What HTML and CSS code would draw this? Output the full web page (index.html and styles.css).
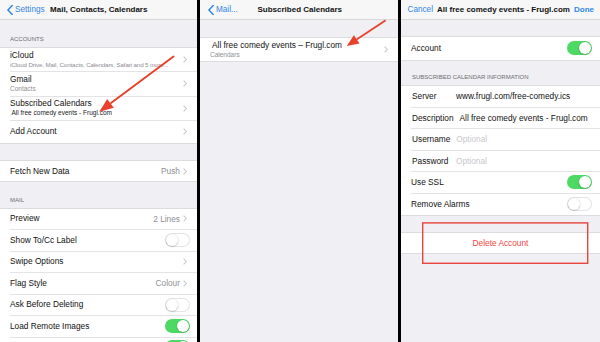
FILE: index.html
```html
<!DOCTYPE html>
<html lang="en">
<head>
<meta charset="utf-8">
<title>Mail, Contacts, Calendars</title>
<link rel="stylesheet" href="styles.css">
</head>
<body>
<div class="screens">
  <section class="phone p1">
    <header class="nav nav-grid">
      <span class="back"><svg class="back-chev" width="6" height="10" viewBox="0 0 6 10"><path d="M5.2 0.6 L0.9 5 L5.2 9.4" fill="none" stroke="currentColor" stroke-width="1.5" stroke-linecap="round" stroke-linejoin="round"/></svg>Settings</span>
      <h1 class="title">Mail, Contacts, Calendars</h1>
      <span></span>
    </header>
    <div class="band b-accounts"><span class="sect">ACCOUNTS</span></div>
    <ul class="group">
      <li class="row r-icloud"><div class="row-body"><div class="txt"><div class="t">iCloud</div><div class="s tight">iCloud Drive, Mail, Contacts, Calendars, Safari and 5 more...</div></div><svg class="chev" width="4" height="7" viewBox="0 0 4 7"><path d="M0.6 0.6 L3.3 3.5 L0.6 6.4" fill="none" stroke="#c7c7cc" stroke-width="1.1"/></svg></div></li>
      <li class="row r-two"><div class="row-body"><div class="txt"><div class="t">Gmail</div><div class="s">Contacts</div></div><svg class="chev" width="4" height="7" viewBox="0 0 4 7"><path d="M0.6 0.6 L3.3 3.5 L0.6 6.4" fill="none" stroke="#c7c7cc" stroke-width="1.1"/></svg></div></li>
      <li class="row r-two"><div class="row-body"><div class="txt"><div class="t">Subscribed Calendars</div><div class="s dark">All free comedy events - Frugl.com</div></div><svg class="chev" width="4" height="7" viewBox="0 0 4 7"><path d="M0.6 0.6 L3.3 3.5 L0.6 6.4" fill="none" stroke="#c7c7cc" stroke-width="1.1"/></svg></div></li>
      <li class="row"><div class="row-body"><span class="t">Add Account</span><svg class="chev" width="4" height="7" viewBox="0 0 4 7"><path d="M0.6 0.6 L3.3 3.5 L0.6 6.4" fill="none" stroke="#c7c7cc" stroke-width="1.1"/></svg></div></li>
    </ul>
    <div class="gap g1"></div>
    <ul class="group">
      <li class="row r-fetch"><div class="row-body"><span class="t">Fetch New Data</span><span class="right"><span class="v">Push</span><svg class="chev" width="4" height="7" viewBox="0 0 4 7"><path d="M0.6 0.6 L3.3 3.5 L0.6 6.4" fill="none" stroke="#c7c7cc" stroke-width="1.1"/></svg></span></div></li>
    </ul>
    <div class="band b-mail"><span class="sect">MAIL</span></div>
    <ul class="group">
      <li class="row"><div class="row-body"><span class="t">Preview</span><span class="right"><span class="v">2 Lines</span><svg class="chev" width="4" height="7" viewBox="0 0 4 7"><path d="M0.6 0.6 L3.3 3.5 L0.6 6.4" fill="none" stroke="#c7c7cc" stroke-width="1.1"/></svg></span></div></li>
      <li class="row"><div class="row-body tog"><span class="t">Show To/Cc Label</span><span class="toggle"></span></div></li>
      <li class="row"><div class="row-body"><span class="t">Swipe Options</span><svg class="chev" width="4" height="7" viewBox="0 0 4 7"><path d="M0.6 0.6 L3.3 3.5 L0.6 6.4" fill="none" stroke="#c7c7cc" stroke-width="1.1"/></svg></div></li>
      <li class="row"><div class="row-body"><span class="t">Flag Style</span><span class="right"><span class="v">Colour</span><svg class="chev" width="4" height="7" viewBox="0 0 4 7"><path d="M0.6 0.6 L3.3 3.5 L0.6 6.4" fill="none" stroke="#c7c7cc" stroke-width="1.1"/></svg></span></div></li>
      <li class="row"><div class="row-body tog"><span class="t">Ask Before Deleting</span><span class="toggle"></span></div></li>
      <li class="row"><div class="row-body tog"><span class="t">Load Remote Images</span><span class="toggle on"></span></div></li>
      <li class="row r-peek"><div class="row-body tog peek"><span class="toggle on"></span></div></li>
    </ul>
  </section>

  <section class="phone p2">
    <header class="nav nav-grid nav2">
      <span class="back"><svg class="back-chev" width="6" height="10" viewBox="0 0 6 10"><path d="M5.2 0.6 L0.9 5 L5.2 9.4" fill="none" stroke="currentColor" stroke-width="1.5" stroke-linecap="round" stroke-linejoin="round"/></svg>Mail...</span>
      <h1 class="title">Subscribed Calendars</h1>
      <span></span>
    </header>
    <div class="gap g2"></div>
    <ul class="group">
      <li class="row r-cal"><div class="row-body"><div class="txt"><div class="t">All free comedy events – Frugl.com</div><div class="s">Calendars</div></div><svg class="chev" width="4" height="7" viewBox="0 0 4 7"><path d="M0.6 0.6 L3.3 3.5 L0.6 6.4" fill="none" stroke="#c7c7cc" stroke-width="1.1"/></svg></div></li>
    </ul>
  </section>

  <section class="phone p3">
    <header class="nav nav3">
      <span class="link">Cancel</span>
      <h1 class="title">All free comedy events - Frugl.com</h1>
      <span class="link bold">Done</span>
    </header>
    <div class="gap g3"></div>
    <ul class="group">
      <li class="row r-account"><div class="row-body tog"><span class="t">Account</span><span class="toggle on"></span></div></li>
    </ul>
    <div class="band b-info"><span class="sect">SUBSCRIBED CALENDAR INFORMATION</span></div>
    <ul class="group">
      <li class="row"><div class="row-body field"><span class="lbl">Server</span><span class="val">www.frugl.com/free-comedy.ics</span></div></li>
      <li class="row"><div class="row-body field"><span class="lbl">Description</span><span class="val">All free comedy events - Frugl.com</span></div></li>
      <li class="row"><div class="row-body field"><span class="lbl">Username</span><span class="val ph">Optional</span></div></li>
      <li class="row"><div class="row-body field"><span class="lbl">Password</span><span class="val ph">Optional</span></div></li>
      <li class="row"><div class="row-body tog"><span class="t">Use SSL</span><span class="toggle on"></span></div></li>
      <li class="row"><div class="row-body tog"><span class="t">Remove Alarms</span><span class="toggle"></span></div></li>
    </ul>
    <div class="gap g4"></div>
    <ul class="group">
      <li class="row r-delete"><div class="row-body center"><span class="danger">Delete Account</span></div></li>
    </ul>
  </section>

  <svg class="marks" width="600" height="342" viewBox="0 0 600 342">
    <line x1="173.5" y1="56.5" x2="111" y2="103" stroke="#e8412c" stroke-width="2" stroke-linecap="round"/>
    <polygon points="99.3,111.7 113.8,107.8 107.2,98.9" fill="#e8412c"/>
    <line x1="385" y1="20.7" x2="357" y2="39.2" stroke="#e8412c" stroke-width="1.8" stroke-linecap="round"/>
    <polygon points="346.7,46 359.5,43.6 353.9,35.2" fill="#e8412c"/>
    <rect x="422.7" y="222.9" width="165" height="40.4" fill="none" stroke="#e8453c" stroke-width="1.4"/>
  </svg>
</div>
</body>
</html>
```

FILE: styles.css
```css
* { box-sizing: border-box; }

html, body {
  margin: 0;
  padding: 0;
}

body {
  background: #000;
  font-family: "Liberation Sans", Arial, Helvetica, sans-serif;
  color: #111;
  width: 600px;
  height: 342px;
  overflow: hidden;
}

.screens {
  position: relative;
  display: flex;
  gap: 3px;
  width: 600px;
  height: 342px;
  overflow: hidden;
}

.phone {
  flex: none;
  height: 342px;
  background: #efeff4;
  overflow: hidden;
}

.p1 { width: 197px; }
.p2 { width: 198px; }
.p3 { width: 199px; }

/* navigation bars */
.nav {
  height: 20px;
  background: #f7f7f8;
  border-bottom: 1px solid #d8d8dc;
  align-items: center;
  padding: 0 6px 0 6.5px;
}

.nav-grid {
  display: grid;
  grid-template-columns: 1fr auto 1fr;
}

.nav2 { padding-left: 7.5px; }

.nav3 {
  display: flex;
  justify-content: space-between;
  padding: 0 6px 0 6.5px;
}

.title {
  margin: 0;
  font-size: 8px;
  font-weight: bold;
  color: #111;
  white-space: nowrap;
  line-height: 10px;
}

.back, .link {
  display: flex;
  align-items: center;
  gap: 2.5px;
  color: #2f86ea;
  font-size: 8.2px;
  line-height: 10px;
  white-space: nowrap;
}

.link.bold { font-weight: bold; font-size: 8px; }

.back-chev { flex: none; }

/* grey bands and gaps */
.band {
  display: flex;
  align-items: flex-end;
}

.sect {
  font-size: 6px;
  line-height: 7px;
  color: #6d6d72;
  padding: 0 10px 4px;
  white-space: nowrap;
}

.b-accounts { height: 27px; }
.b-mail { height: 25.5px; }
.b-info { height: 24.5px; padding-left: 1px; }

.g1 { height: 16.5px; }
.g2 { height: 17px; }
.g3 { height: 16px; }
.g4 { height: 15.5px; }

/* grouped lists */
.group {
  list-style: none;
  margin: 0;
  padding: 0;
  background: #fff;
  border-top: 1px solid #dcdce0;
  border-bottom: 1px solid #dcdce0;
}

.row {
  height: 21.5px;
  padding-left: 10px;
  background: #fff;
}

.r-icloud { height: 24px; }
.r-two { height: 24.5px; }
.r-fetch { height: 20px; }
.r-cal { height: 23px; }
.r-account { height: 22.5px; }
.r-delete { height: 20px; }

.row-body {
  height: 100%;
  display: flex;
  align-items: center;
  justify-content: space-between;
  gap: 4px;
  padding-right: 10px;
  border-bottom: 1px solid #e3e3e6;
}

.row:last-child .row-body { border-bottom: none; }

.row-body.tog { padding-right: 7px; }

.row-body.peek {
  justify-content: flex-end;
  align-items: flex-start;
  padding-top: 2px;
}

.p3 .row-body.tog { padding-right: 8.5px; }

.row-body.center { justify-content: center; padding-right: 10px; }

.txt {
  flex: 1;
  min-width: 0;
}

.t {
  font-size: 8.3px;
  line-height: 9px;
  color: #111;
  white-space: nowrap;
}

.r-cal .t { line-height: 10px; padding-left: 2px; }

.s {
  font-size: 6.5px;
  line-height: 9px;
  color: #8e8e93;
  white-space: nowrap;
  overflow: hidden;
}

.s.tight {
  font-size: 6.2px;
  letter-spacing: -0.12px;
}

.s.dark { color: #1a1a1a; padding-left: 1.5px; }

.right {
  display: flex;
  align-items: center;
  gap: 3px;
}

.v {
  font-size: 8.3px;
  color: #8e8e93;
  white-space: nowrap;
}

.chev { flex: none; }

/* switches */
.toggle {
  flex: none;
  display: flex;
  justify-content: flex-start;
  align-items: center;
  width: 25px;
  height: 14px;
  padding: 1px;
  border-radius: 7px;
  background: #fff;
  box-shadow: inset 0 0 0 1px #e4e4e8;
}

.toggle::after {
  content: "";
  width: 12px;
  height: 12px;
  border-radius: 50%;
  background: #fff;
  box-shadow: 0 0.5px 1.5px rgba(0, 0, 0, 0.35);
}

.toggle.on {
  justify-content: flex-end;
  background: #4cd964;
  box-shadow: none;
}

/* account fields */
.field { justify-content: flex-start; gap: 0; }

.lbl {
  min-width: 45px;
  padding-right: 6px;
  padding-left: 1px;
  font-size: 8.3px;
  white-space: nowrap;
  color: #111;
}

.val {
  font-size: 8.3px;
  white-space: nowrap;
  color: #111;
}

.val.ph { color: #c7c7cd; }

.danger {
  font-size: 8.3px;
  color: #f2453d;
}

/* annotation overlay */
.marks {
  position: absolute;
  top: 0;
  left: 0;
  pointer-events: none;
}
```
